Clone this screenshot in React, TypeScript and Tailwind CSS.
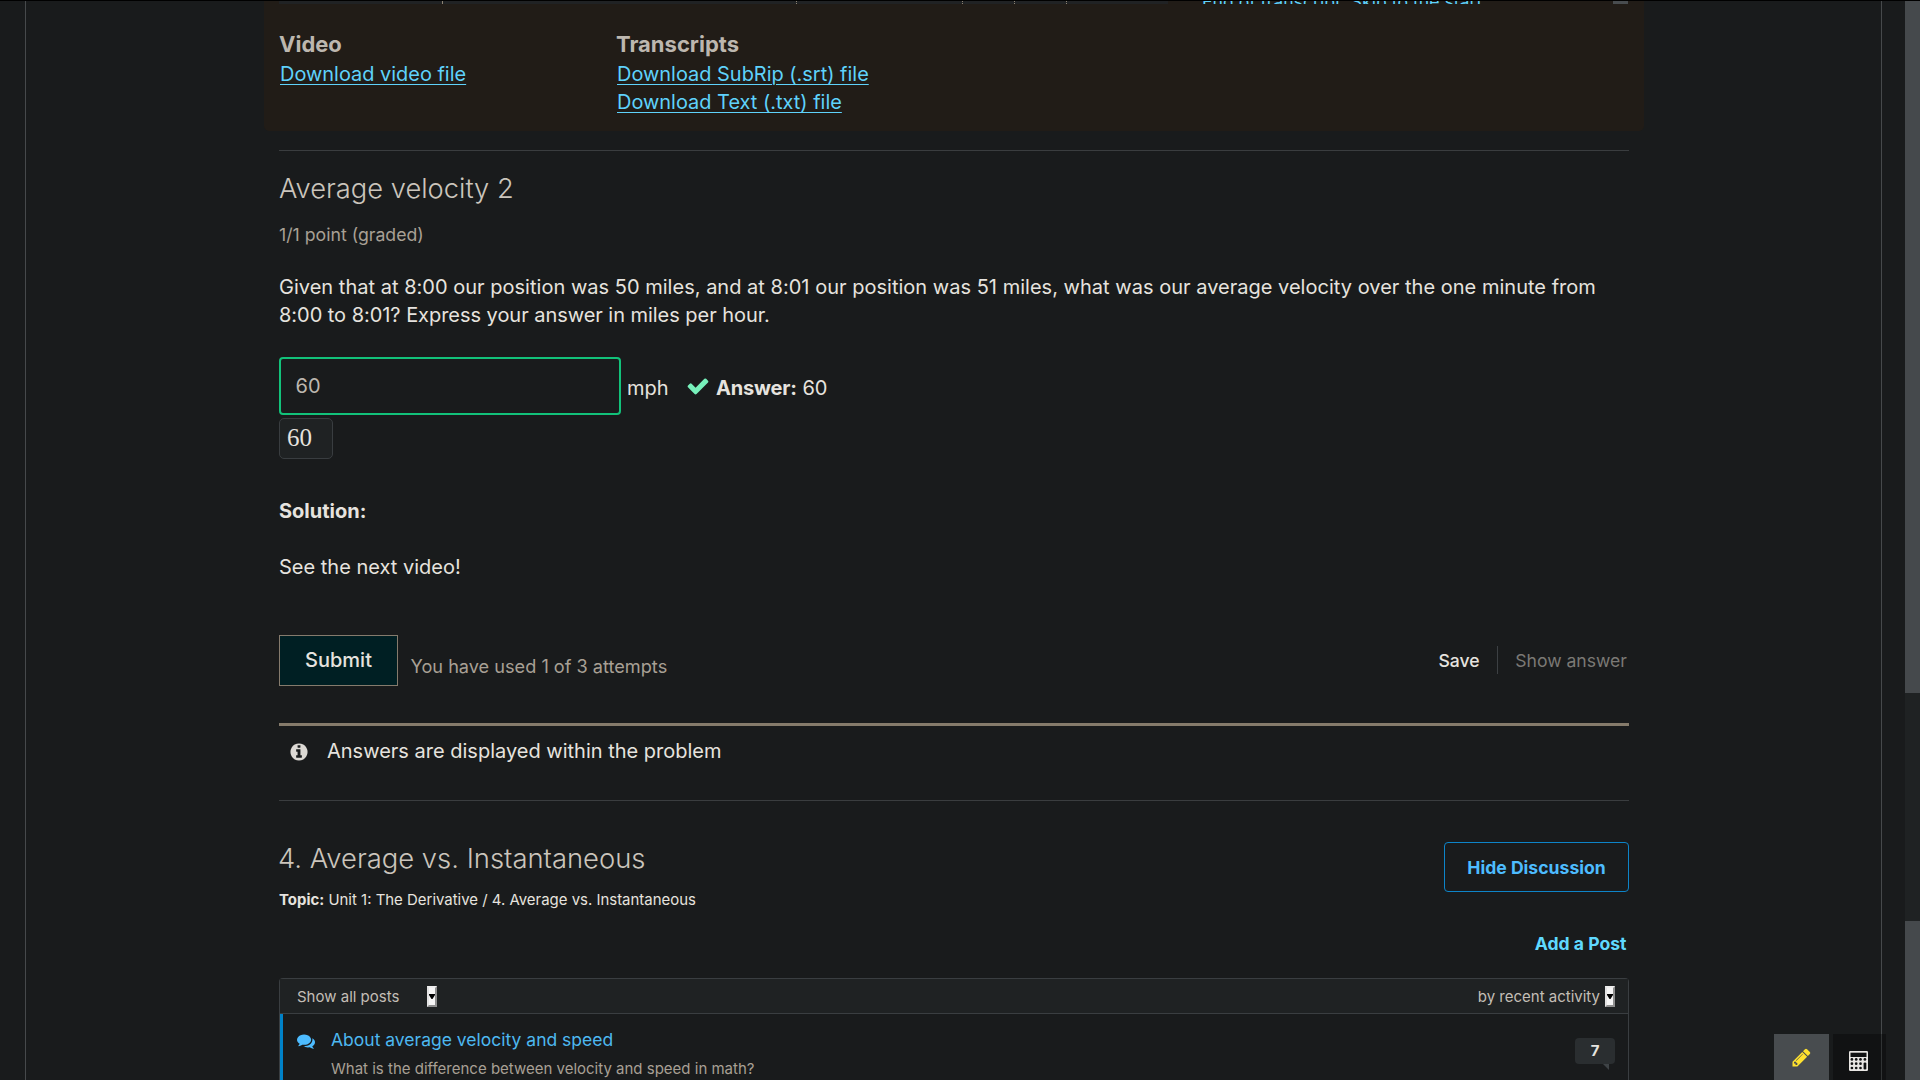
type IconProps = { path: string; className: string };

const CHECK =
  "M1671 566q0 40-28 68l-724 724-136 136q-28 28-68 28t-68-28l-136-136-362-362q-28-28-28-68t28-68l136-136q28-28 68-28t68 28l294 295 656-657q28-28 68-28t68 28l136 136q28 28 28 68z";
const INFO =
  "M1152 1376v-160q0-14-9-23t-23-9h-96v-512q0-14-9-23t-23-9h-320q-14 0-23 9t-9 23v160q0 14 9 23t23 9h96v320h-96q-14 0-23 9t-9 23v160q0 14 9 23t23 9h448q14 0 23-9t9-23zm-128-896v-160q0-14-9-23t-23-9h-192q-14 0-23 9t-9 23v160q0 14 9 23t23 9h192q14 0 23-9t9-23zm640 416q0 209-103 385.5t-279.5 279.5-385.5 103-385.5-103-279.5-279.5-103-385.5 103-385.5 279.5-279.5 385.5-103 385.5 103 279.5 279.5 103 385.5z";
const PENCIL =
  "M491 1536l91-91-235-235-91 91v107h128v128h107zm523-928q0-22-22-22-10 0-17 7l-542 542q-7 7-7 17 0 22 22 22 10 0 17-7l542-542q7-7 7-17zm-54-192l416 416-832 832h-416v-416zm683 96q0 53-37 90l-166 166-416-416 166-165q36-38 90-38 53 0 91 38l235 234q37 39 37 91z";
const COMMENTS =
  "M1408 768q0 139-94 257t-256.5 186.5-353.5 68.5q-86 0-176-16-124 88-278 128-36 9-86 16h-3q-11 0-20.5-8t-11.5-21q-1-3-1-6.5t.5-6.5 2-6l2.5-5 3.5-5.5 4-5 4.5-5 4-4.5q5-6 23-25t26-29.5 22.5-29 25-38.5 20.5-44q-124-72-195-177t-71-224q0-139 94-257t256.5-186.5 353.5-68.5 353.5 68.5 256.5 186.5 94 257zm384 256q0 120-71 224.5t-195 176.5q10 24 20.5 44t25 38.5 22.5 29 26 29.5 23 25q1 1 4 4.5t4.5 5 4 5 3.5 5.5l2.5 5 2 6 .5 6.5-1 6.5q-3 14-13 22t-22 7q-50-7-86-16-154-40-278-128-90 16-176 16-271 0-472-132 58 4 88 4 161 0 309-45t264-129q125-92 192-212t67-254q0-77-23-152 129 71 204 178t75 230z";

function Icon({ path, className }: IconProps) {
  return (
    <svg viewBox="0 0 1792 1792" fill="currentColor" className={className}>
      <path d={path} />
    </svg>
  );
}

function CalculatorIcon() {
  return (
    <svg viewBox="0 0 19 20" className="h-5 w-[19px] text-[#e8e6e3]">
      <rect width="19" height="20" rx="1.2" fill="currentColor" />
      <g fill="#111213">
        <rect x="1.5" y="1.7" width="16" height="4.3" />
        {[8.4, 12.7, 17].map((y) =>
          [2.9, 7.2, 11.5, 15.9].map((x) =>
            x > 15 && y > 9 ? null : <circle key={`${x}-${y}`} cx={x} cy={y} r="1.35" />,
          ),
        )}
        <rect x="14.6" y="11.4" width="2.7" height="7" rx="1.2" />
      </g>
    </svg>
  );
}

function DropArrow() {
  return (
    <span className="flex h-[21px] w-[10px] items-center justify-center border-2 border-t-[#efefef] border-r-[#8f8f8f] border-b-[#8f8f8f] border-l-[#e3e3e3] bg-[#f6f6f6]">
      <svg viewBox="0 0 6 5" className="-mt-px h-[5px] w-[6px] shrink-0">
        <path d="M0 0h6v1L3.5 5h-1L0 1z" fill="#000" />
      </svg>
    </span>
  );
}

function FileLink({ children }: { children: string }) {
  return (
    <a className="ml-px block w-fit text-[19.95px] leading-7 text-[#5fd2fb] underline decoration-1 underline-offset-[3px]">
      {children}
    </a>
  );
}

function VideoBlock() {
  return (
    <section className="-mx-[15px] flex h-[130px] flex-col rounded-b-[5px] bg-[#211c17] px-[15px]">
      <div className="flex h-[3px] shrink-0 overflow-hidden">
        <div className="flex w-[889px] bg-[#202224]">
          <span className="w-[164px] border-r border-[#8c8272]" />
          <span className="w-[354px] border-r border-dotted border-[#8c8272]" />
          <span className="w-[166px] border-r border-dotted border-[#8c8272]" />
          <span className="w-[52px] border-r border-dotted border-[#8c8272]" />
          <span className="w-[52px] border-r border-dotted border-[#8c8272]" />
        </div>
        <span className="-mt-[9px] ml-[34px] h-5 w-[411px] text-[17.65px] leading-5 whitespace-nowrap text-[#5fd2fb]">
          End of transcript. Skip to the start.
        </span>
        <span className="w-[15px] bg-[#484c4f]" />
      </div>
      <div className="mt-[25px] flex">
        <div className="w-[337px]">
          <h3 className="mb-px text-[22px] leading-[30px] font-bold text-[#bdb7af]">Video</h3>
          <FileLink>Download video file</FileLink>
        </div>
        <div>
          <h3 className="mb-px text-[22px] leading-[30px] font-bold text-[#bdb7af]">Transcripts</h3>
          <FileLink>Download SubRip (.srt) file</FileLink>
          <FileLink>Download Text (.txt) file</FileLink>
        </div>
      </div>
    </section>
  );
}

function Problem() {
  return (
    <section className="flex flex-col">
      <h2 className="mt-[20px] text-[27.3px] leading-9 font-light text-[#cbc5bc]">Average velocity 2</h2>
      <p className="mt-[16px] text-[17.7px] leading-6 text-[#a8a095]">1/1 point (graded)</p>
      <p className="mt-[26px] leading-7">
        <span className="tracking-[0.018px]">
          Given that at 8:00 our position was 50 miles, and at 8:01 our position was 51 miles, what was our average
          velocity over the one minute from
        </span>
        <br />
        <span className="tracking-[-0.04px]">8:00 to 8:01? Express your answer in miles per hour.</span>
      </p>
      <div className="mt-7 flex h-[58px]">
        <div className="flex w-[342px] items-center rounded-[4px] border-2 border-[#12c27a] px-[14.5px] pb-px text-[#bdb7af]">
          60
        </div>
        <span className="mt-[17px] ml-[6px] leading-7">mph</span>
        <Icon path={CHECK} className="mt-[17px] ml-[17.5px] size-6 text-[#77f1bb]" />
        <p className="mt-[17px] ml-[6px] leading-7">
          <b className="font-bold tracking-[-0.2px]">Answer:</b> 60
        </p>
      </div>
      <div className="mt-[3px] flex h-[41px] w-[54px] rounded-[5px] border border-[#393d40] bg-[#1f2223] pl-[7px] font-['Liberation_Serif',serif] text-[25px] leading-[38px]">
        60
      </div>
      <p className="mt-[38px] leading-7 font-bold">Solution:</p>
      <p className="mt-7 leading-7">See the next video!</p>
      <div className="mt-[54px] flex h-[51px]">
        <button className="w-[119px] border border-[#857b6d] bg-[#001f23] pb-px font-medium">Submit</button>
        <p className="mt-[19px] ml-[12.5px] text-[18.15px] leading-6 whitespace-nowrap text-[#a8a095]">
          You have used 1 of 3 attempts
        </p>
        <div className="mt-[11px] ml-auto flex h-7 items-center pr-[2px] text-[17.6px] leading-7">
          <span className="pt-px pr-[17px] font-medium">Save</span>
          <span className="h-7 w-px bg-[#3c4043]" />
          <span className="pt-px pl-[17.5px] text-[#7b7975]">Show answer</span>
        </div>
      </div>
      <div className="mt-[37px] flex h-[77px] border-t-[3px] border-[#857b6b]">
        <Icon path={INFO} className="mt-4 ml-[10px] size-5 text-[#dcd9d4]" />
        <p className="mt-[11px] ml-[18px] leading-7">Answers are displayed within the problem</p>
      </div>
    </section>
  );
}

function Discussion() {
  return (
    <section className="flex flex-col">
      <div className="mt-[38px] flex justify-between">
        <div>
          <h2 className="mt-px -ml-px text-[27.4px] leading-9 font-light text-[#cbc5bc]">
            4. Average vs. Instantaneous
          </h2>
          <p className="mt-[14px] text-[14.95px] leading-5">
            <b className="font-bold">Topic:</b> Unit 1: The Derivative / 4. Average vs. Instantaneous
          </p>
        </div>
        <button className="mt-[3px] h-[50px] w-[185px] rounded-[4px] border border-[#0d84c8] pt-[2px] text-[17.6px] font-bold text-[#4dbcff]">
          Hide Discussion
        </button>
      </div>
      <a className="mt-[22px] self-end pr-[2.5px] text-[17.6px] leading-6 font-bold text-[#5fd9ff]">Add a Post</a>
      <div className="mt-[22px] h-[102px] rounded-t-[4px] border border-b-0 border-[#3a3e41]">
        <div className="flex h-[35px] items-start justify-between border-b border-[#3a3e41] bg-[#1f2223] pr-[13px] pl-[17px] text-[15px] leading-5 text-[#c3beb6]">
          <div className="mt-[7px] flex">
            <span className="mt-[1px] w-[130px]">Show all posts</span>
            <DropArrow />
          </div>
          <div className="mt-[7px] flex gap-[5px]">
            <span className="mt-[1px]">by recent activity</span>
            <DropArrow />
          </div>
        </div>
        <div className="flex h-[66px] overflow-hidden border-l-[3px] border-[#0082c8] pr-[13px] pl-[14px]">
          <Icon path={COMMENTS} className="mt-[18px] size-[18px] text-[#4dbcff]" />
          <div className="ml-4 grow">
            <h3 className="mt-[14px] text-[17.5px] leading-6 text-[#4db8f0]">About average velocity and speed</h3>
            <p className="mt-[7px] text-[15px] leading-5 text-[#a8a095]">
              What is the difference between velocity and speed in math?
            </p>
          </div>
          <div className="mt-6 flex flex-col">
            <span className="h-[26px] w-10 rounded-[4px] bg-[#2a2e30] text-center text-[15px] leading-[25px] font-bold">
              7
            </span>
            <svg viewBox="0 0 6 6" className="mr-[6px] size-[6px] self-end">
              <path d="M0 0h6v6z" fill="#3e4346" />
            </svg>
          </div>
        </div>
      </div>
    </section>
  );
}

export default function App() {
  return (
    <div className="relative flex h-[1080px] w-[1920px] overflow-hidden border-t border-black bg-[#191b1c] font-[Inter,sans-serif] text-[20px] text-[#e6e3df]">
      <div className="ml-[25px] w-[1857px] border-x border-[#46494b] pr-[252px] pl-[253px]">
        <VideoBlock />
        <hr className="mt-[19px] border-[#3a3d3f]" />
        <Problem />
        <hr className="border-[#3a3d3f]" />
        <Discussion />
      </div>
      <div className="ml-auto flex w-[15px] flex-col bg-[#1f2223]">
        <span className="h-[692px] bg-[#45494c]" />
        <span className="mt-auto h-[159px] bg-[#45494c]" />
      </div>
      <div className="absolute right-[34px] bottom-0 flex h-[46px] gap-1">
        <button className="w-[55px] bg-[#484c4f] pt-3 pl-[17px]">
          <Icon path={PENCIL} className="-mt-[11px] size-[21px] text-[#ffe22f]" />
        </button>
        <button className="flex w-[53px] bg-black/30 pt-[17px] pl-4">
          <CalculatorIcon />
        </button>
      </div>
    </div>
  );
}
